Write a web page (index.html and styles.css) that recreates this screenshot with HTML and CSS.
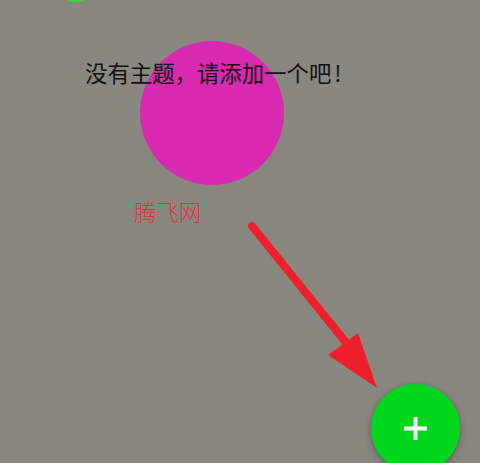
FILE: index.html
```html
<!DOCTYPE html>
<html lang="zh">
<head>
<meta charset="utf-8">
<link rel="stylesheet" href="styles.css">
</head>
<body>
<div class="screen">
  <div class="top-dot"></div>
  <div class="blob"></div>
  <p class="empty-msg">没有主题，请添加一个吧<span class="bang">!</span></p>
  <p class="brand">腾飞网</p>
  <svg class="arrow" width="480" height="463" viewBox="0 0 480 463">
    <line x1="252" y1="226" x2="352" y2="350" stroke="#ee1f2a" stroke-width="8" stroke-linecap="round"/>
    <polygon points="328,355 358,333 377,388" fill="#ee1f2a"/>
  </svg>
  <button class="fab" aria-label="添加">
    <svg width="23" height="23" viewBox="0 0 23 23"><rect x="0" y="9.5" width="23" height="4" fill="#fff"/><rect x="9.5" y="0" width="4" height="23" fill="#fff"/></svg>
  </button>
</div>
</body>
</html>
```
FILE: styles.css
```css
html, body {
  margin: 0;
  padding: 0;
  background: #888880;
}
.screen {
  position: relative;
  width: 480px;
  height: 463px;
  overflow: hidden;
  background: #888880;
  font-family: "Noto Sans CJK SC", "Noto Sans", sans-serif;
}
.top-dot {
  position: absolute;
  left: 58px;
  top: -34px;
  width: 36px;
  height: 36px;
  border-radius: 50%;
  background: #2ee02a;
  filter: blur(0.6px);
}
.blob {
  position: absolute;
  left: 139.5px;
  top: 41px;
  width: 144px;
  height: 144px;
  border-radius: 50%;
  background: #d82ab0;
}
.empty-msg {
  position: relative;
  margin: 0;
  padding: 61px 0 0 85px;
  font-size: 22.4px;
  line-height: 22px;
  color: #111;
}
.bang {
  margin-left: 3px;
}
.brand {
  position: relative;
  margin: 117px 0 0 134px;
  font-size: 22.4px;
  line-height: 22px;
  font-weight: 300;
  color: #e2303e;
}
.arrow {
  position: absolute;
  left: 0;
  top: 0;
}
.fab {
  position: absolute;
  left: 370.5px;
  top: 384px;
  width: 89px;
  height: 89px;
  border: 0;
  padding: 0;
  border-radius: 50%;
  background: #00d81e;
  box-shadow: 0 2px 7px rgba(0,0,0,0.35);
  display: flex;
  align-items: center;
  justify-content: center;
}
.fab svg {
  display: block;
  margin-top: -1px;
}
```
